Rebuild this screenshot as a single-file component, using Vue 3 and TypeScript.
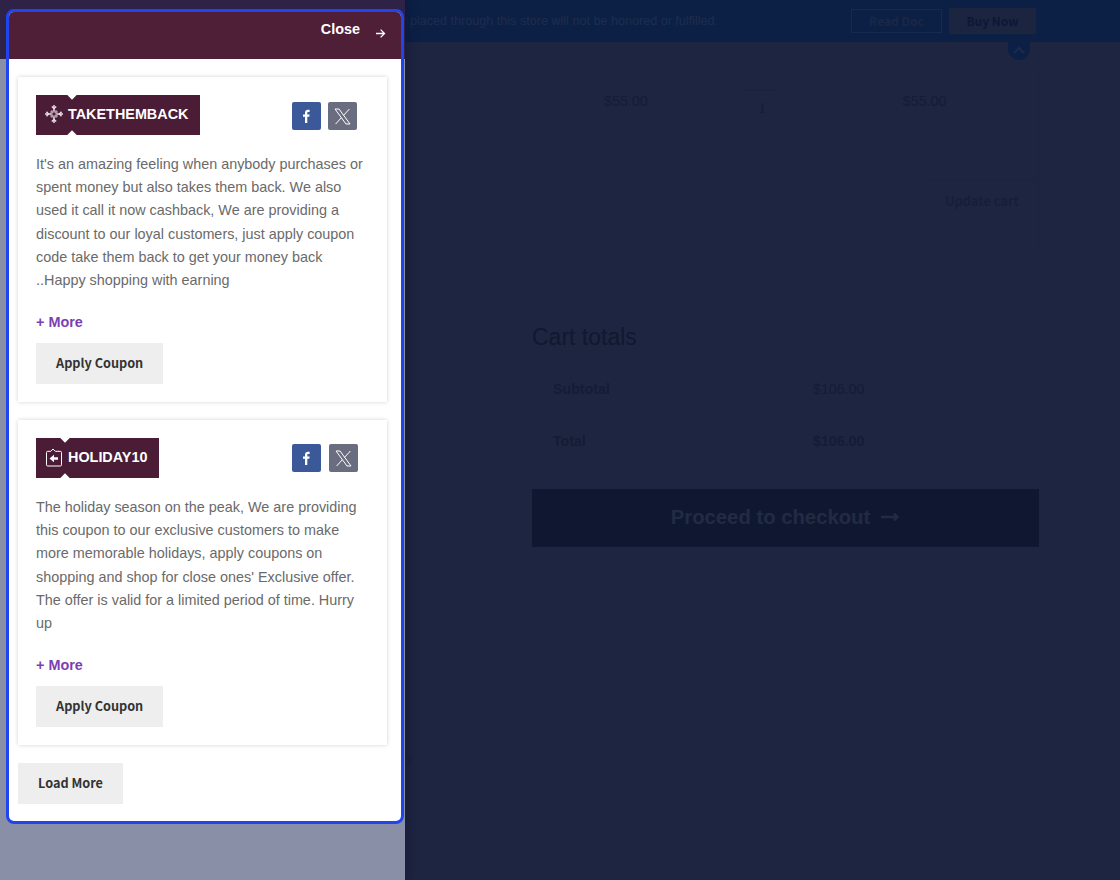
<script setup lang="ts">
interface Coupon {
  code: string;
  icon: 'cross' | 'bag';
  text: string;
}

const coupons: Coupon[] = [
  {
    code: 'TAKETHEMBACK',
    icon: 'cross',
    text: "It's an amazing feeling when anybody purchases or spent money but also takes them back. We also used it call it now cashback, We are providing a discount to our loyal customers, just apply coupon code take them back to get your money back ..Happy shopping with earning",
  },
  {
    code: 'HOLIDAY10',
    icon: 'bag',
    text: "The holiday season on the peak, We are providing this coupon to our exclusive customers to make more memorable holidays, apply coupons on shopping and shop for close ones' Exclusive offer. The offer is valid for a limited period of time. Hurry up",
  },
];
</script>

<template>
  <div class="page">
    <aside class="drawer">
      <div class="panel">
        <header class="panel-head">
          <span class="close-label">Close</span>
          <svg class="close-arrow" width="11" height="11" viewBox="0 0 11 11" fill="none" stroke="#fff" stroke-width="1.3">
            <path d="M1 5.5h8.4M5.6 1.600l3.900 3.900-3.900 3.900" />
          </svg>
        </header>
        <div class="panel-body">
          <article v-for="c in coupons" :key="c.code" class="card" :class="c.icon">
            <div class="card-top">
              <div class="badge">
                <svg v-if="c.icon === 'cross'" width="18" height="18" viewBox="0 0 18 18" fill="none" stroke="#eadde5" stroke-width="1.5">
                  <path d="M9 0v6.500M9 11.500V18M0 9h6.500M11.500 9H18" />
                  <path d="M6.800 1.500 9 3.500l2.200-2M6.800 16.500 9 14.500l2.200 2M1.500 6.800 3.500 9l-2 2.200M16.500 6.800 14.500 9l2 2.200" />
                  <path d="M5 7h8M5 11h8M7 5v8M11 5v8" stroke-width="1" opacity="0.8" />
                </svg>
                <svg v-else width="18" height="19" viewBox="0 0 18 19" fill="none" stroke="#fff" stroke-width="1">
                  <path d="M1.500 4.500A1.200 1.200 0 0 1 2.700 3.300h3.100L8 1l2.300 2.300h5a1.200 1.200 0 0 1 1.200 1.200v12.300a1.200 1.200 0 0 1-1.200 1.200H2.700a1.200 1.200 0 0 1-1.200-1.200z" />
                  <path d="M4.500 10.500 9 6.800v2.400h4v2.600H9v2.400z" fill="#fff" stroke="none" />
                </svg>
                <span class="badge-code">{{ c.code }}</span>
              </div>
              <div class="socials">
                <a class="social fb">
                  <svg width="10" height="14" viewBox="0 0 10 14" fill="#fff">
                    <path d="M3 14V7.800H1V5.400h2V3.700C3 1.700 4.200.700 5.900.700c.8 0 1.500.1 1.700.1v2.100H6.400c-.9 0-1.100.5-1.100 1.100v1.400h2.300l-.3 2.400h-2V14z" />
                  </svg>
                </a>
                <a class="social tw">
                  <svg width="17" height="17" viewBox="0 0 17 17" fill="none" stroke="#fff" stroke-width="1">
                    <path d="M1 1h4l11 15h-4zM15.400 1 9.500 7.400M7.300 9.800 1.600 16" />
                  </svg>
                </a>
              </div>
            </div>
            <p class="desc">{{ c.text }}</p>
            <a class="more">+ More</a>
            <button class="btn" type="button">Apply Coupon</button>
          </article>
          <button class="btn load" type="button">Load More</button>
        </div>
      </div>
    </aside>

    <main class="behind">
      <span class="stray">3</span>
      <div class="notice">
        <span class="notice-text">placed through this store will not be honored or fulfilled.</span>
        <a class="doc">Read Doc</a>
        <a class="buy">Buy Now</a>
        <span class="bump">
          <svg width="12" height="8" viewBox="0 0 12 8" fill="none" stroke="#1c2b4d" stroke-width="2.200">
            <path d="M1 7l5-5 5 5" />
          </svg>
        </span>
      </div>
      <div class="cart-box">
        <div class="cart-row">
          <span class="price first">$55.00</span>
          <span class="qty">1</span>
          <span class="price sub">$55.00</span>
        </div>
        <div class="update-row">
          <span class="update">Update cart</span>
        </div>
      </div>
      <section class="totals">
        <h2>Cart totals</h2>
        <div class="totals-table">
          <div class="t-row"><b>Subtotal</b><span>$106.00</span></div>
          <div class="t-row"><b>Total</b><b>$106.00</b></div>
        </div>
        <div class="checkout">
          Proceed to checkout
          <svg width="18" height="10" viewBox="0 0 18 10" fill="none" stroke="#222b42" stroke-width="2.400">
            <path d="M0 5h16M13 1.500 16.500 5 13 8.500" />
          </svg>
        </div>
      </section>
    </main>
  </div>
</template>

<style>
html,
body {
  margin: 0;
  background: #1e2540;
}
</style>

<style scoped>
.page {
  display: flex;
  width: 1120px;
  height: 880px;
  overflow: hidden;
  font-family: 'Liberation Sans', Arial, sans-serif;
  background: #1e2540;
}

.drawer {
  position: relative;
  z-index: 1;
  flex: 0 0 405px;
  box-sizing: border-box;
  padding: 9px 0 0 6px;
  background: linear-gradient(#2f2247 59px, #8a8fa8 59px);
  box-shadow: 3px 0 10px rgba(8, 12, 50, 0.35);
}
.panel {
  box-sizing: border-box;
  width: 398px;
  height: 815px;
  border: 3px solid #2044ee;
  border-radius: 8px;
  overflow: hidden;
  background: #fff;
}
.panel-head {
  display: flex;
  align-items: flex-start;
  justify-content: flex-end;
  height: 47px;
  padding: 9px 15px 0 0;
  box-sizing: border-box;
  background: #4f1f38;
  color: #fff;
}
.close-label {
  font-size: 14.4px;
  font-weight: 700;
  line-height: 17px;
}
.close-arrow {
  margin: 7px 0 0 15px;
}

.panel-body {
  padding: 18px 14px 0 9px;
}
.card {
  box-sizing: border-box;
  width: 369px;
  height: 325px;
  margin-bottom: 18px;
  padding: 18px 18px 0;
  background: #fff;
  box-shadow: 0 0 4px rgba(0, 0, 0, 0.18);
}
.card-top {
  display: grid;
  grid-template-columns: 256px auto;
  align-items: start;
  height: 40px;
}
.badge {
  position: relative;
  display: inline-flex;
  justify-self: start;
  align-items: center;
  gap: 5px;
  height: 40px;
  padding: 0 12px 2px 9px;
  box-sizing: border-box;
  background: #4b1c36;
  color: #fff;
  font-size: 14.4px;
  font-weight: 700;
}
.badge::before,
.badge::after {
  content: '';
  position: absolute;
  left: 32px;
  width: 8px;
  height: 8px;
  background: #fff;
  transform: rotate(45deg);
}
.bag .badge::before,
.bag .badge::after {
  left: 25px;
}
.badge::before {
  top: -5px;
}
.badge::after {
  bottom: -5px;
}
.socials {
  display: flex;
  gap: 7px;
  margin-top: 7px;
}
.bag .socials {
  gap: 8px;
  margin-top: 6px;
}
.social {
  display: flex;
  align-items: center;
  justify-content: center;
  width: 29px;
  height: 28px;
  border-radius: 2px;
}
.fb {
  background: #3b5998;
}
.tw {
  background: #6a6c80;
}
.desc {
  margin: 18px 0 0;
  width: 333px;
  color: #6a6a6a;
  font-size: 14.4px;
  line-height: 23.2px;
}
.more {
  display: block;
  margin-top: 20px;
  color: #7b3fb3;
  font-size: 14.4px;
  font-weight: 700;
  line-height: 21px;
}
.btn {
  display: block;
  height: 41px;
  margin-top: 10px;
  padding: 0 20px 2px;
  border: none;
  background: #eee;
  color: #333;
  font-family: 'Noto Sans CJK SC', 'Noto Sans', sans-serif;
  font-size: 12.7px;
  font-weight: 700;
}
.btn.load {
  margin-top: 0;
}

.behind {
  position: relative;
  flex: 1;
  color: #141b33;
}
.stray {
  position: absolute;
  top: 754px;
  left: 0;
  font-size: 12px;
  line-height: 14px;
  color: #182038;
}
.notice {
  display: flex;
  align-items: center;
  height: 42px;
  padding-left: 5px;
  background: #0c2045;
  font-size: 12.6px;
  color: #1e2d4e;
}
.notice-text {
  width: 441px;
  white-space: nowrap;
}
.doc {
  box-sizing: border-box;
  width: 91px;
  height: 24px;
  border: 1px solid #132a52;
  text-align: center;
  line-height: 22px;
  font-family: 'Noto Sans CJK SC', 'Noto Sans', sans-serif;
  font-size: 12px;
  font-weight: 700;
  color: #1a2747;
}
.buy {
  width: 87px;
  height: 26px;
  margin-left: 7px;
  border-radius: 1px;
  background: #1c2540;
  text-align: center;
  line-height: 26px;
  font-family: 'Noto Sans CJK SC', 'Noto Sans', sans-serif;
  font-size: 12px;
  font-weight: 700;
  color: #0e1738;
}
.bump {
  position: absolute;
  top: 40px;
  left: 603px;
  display: flex;
  align-items: flex-start;
  justify-content: center;
  width: 22px;
  height: 20px;
  padding-top: 6px;
  box-sizing: border-box;
  border-radius: 0 0 11px 11px;
  background: #0c2045;
}
.cart-box {
  box-sizing: border-box;
  width: 634px;
  height: 182px;
  margin-top: 25px;
  border-right: 1px solid #1c233d;
}
.cart-row {
  display: flex;
  height: 113px;
  padding-top: 25px;
  box-sizing: border-box;
  font-size: 14.3px;
  color: #141c38;
}
.price {
  line-height: 18px;
}
.price.first {
  margin-left: 199px;
}
.qty {
  box-sizing: border-box;
  width: 40px;
  height: 34px;
  margin: -2px 0 0 92px;
  padding: 9px 0 0 19px;
  border-top: 1px solid #1b2240;
  font-family: 'Liberation Serif', serif;
  font-size: 14px;
  line-height: 18px;
  color: #101b3e;
}
.price.sub {
  margin-left: 123px;
}
.update-row {
  display: flex;
  justify-content: flex-end;
}
.update {
  box-sizing: border-box;
  width: 110px;
  height: 44px;
  padding: 11px 0 0 17px;
  border-top: 1px solid #1c233d;
  font-family: 'Noto Sans CJK SC', 'Noto Sans', sans-serif;
  font-size: 12.8px;
  font-weight: 700;
  line-height: 18px;
  color: #171e3c;
}
.totals {
  width: 507px;
  margin: 0 0 0 127px;
  padding-top: 71px;
}
.totals h2 {
  margin: 0;
  font-size: 23px;
  font-weight: 400;
  line-height: 34px;
  color: #11182f;
}
.totals-table {
  margin-top: 13px;
}
.t-row {
  display: grid;
  grid-template-columns: 260px 1fr;
  height: 52px;
  padding-left: 21px;
  box-sizing: border-box;
  font-size: 14.2px;
  line-height: 44px;
  color: #141c36;
}
.checkout {
  display: flex;
  align-items: center;
  justify-content: center;
  gap: 11px;
  height: 58px;
  margin-top: 18px;
  padding: 0 1px 2px 0;
  box-sizing: border-box;
  background: #101831;
  color: #222b42;
  font-size: 20.3px;
  font-weight: 700;
}
</style>
